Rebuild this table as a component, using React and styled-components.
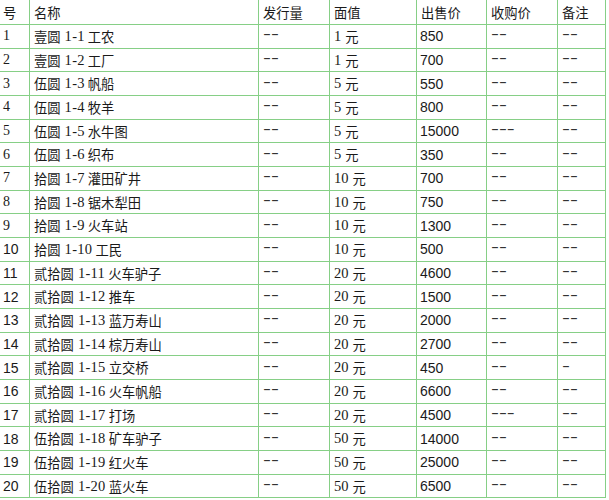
import React from 'react';
import styled, { createGlobalStyle } from 'styled-components';

const GlobalStyle = createGlobalStyle`
    html, body {
        margin: 0;
        padding: 0;
        background: #ffffff;
    }
`;

const Sheet = styled.div`
    display: grid;
    grid-template-columns: 30px 229px 71px 87px 70px 71px 48px;
    grid-template-rows: 25px;
    grid-auto-rows: 23.68px;
    width: 606px;
    font-family: "Liberation Serif", "Noto Sans CJK SC", serif;
    font-size: 13.3px;
    color: #1a1a1a;
    background: #ffffff;
`;

const Cell = styled.div`
    display: flex;
    align-items: center;
    padding-left: ${(p) => p.$pad || 3}px;
    border-right: 1px solid #86cf86;
    border-bottom: 1px solid #86cf86;
    white-space: nowrap;
    overflow: hidden;
    font-family: ${(p) => (p.$sans ? '"Liberation Sans", "Noto Sans CJK SC", sans-serif' : 'inherit')};
    font-size: ${(p) => (p.$big ? '14px' : 'inherit')};
`;

// Latin part of a mixed label, a bit larger like the half-width glyphs of the original
const Code = styled.span`
    font-size: 14.5px;
    margin: 0 3px 0 4px;
    letter-spacing: 0.3px;
`;

const Face = styled.span`
    font-size: 14.5px;
    margin-right: 4px;
`;

const Dash = styled.span`
    display: inline-block;
    font-family: "Liberation Sans", sans-serif;
    font-size: 14px;
    letter-spacing: 0;
    color: #333;
    transform-origin: left center;
    transform: translateY(-2px) scaleX(1.7);
`;

const headers = ['号', '名称', '发行量', '面值', '出售价', '收购价', '备注'];

const rows = [
    ['1', '壹圆', '1-1', '工农', '1', '850'],
    ['2', '壹圆', '1-2', '工厂', '1', '700'],
    ['3', '伍圆', '1-3', '帆船', '5', '550'],
    ['4', '伍圆', '1-4', '牧羊', '5', '800'],
    ['5', '伍圆', '1-5', '水牛图', '5', '15000', '---'],
    ['6', '伍圆', '1-6', '织布', '5', '350'],
    ['7', '拾圆', '1-7', '灌田矿井', '10', '700'],
    ['8', '拾圆', '1-8', '锯木犁田', '10', '750'],
    ['9', '拾圆', '1-9', '火车站', '10', '1300'],
    ['10', '拾圆', '1-10', '工民', '10', '500'],
    ['11', '贰拾圆', '1-11', '火车驴子', '20', '4600'],
    ['12', '贰拾圆', '1-12', '推车', '20', '1500'],
    ['13', '贰拾圆', '1-13', '蓝万寿山', '20', '2000'],
    ['14', '贰拾圆', '1-14', '棕万寿山', '20', '2700'],
    ['15', '贰拾圆', '1-15', '立交桥', '20', '450', '--', '-'],
    ['16', '贰拾圆', '1-16', '火车帆船', '20', '6600'],
    ['17', '贰拾圆', '1-17', '打场', '20', '4500', '---'],
    ['18', '伍拾圆', '1-18', '矿车驴子', '50', '14000'],
    ['19', '伍拾圆', '1-19', '红火车', '50', '25000'],
    ['20', '伍拾圆', '1-20', '蓝火车', '50', '6500'],
];

const App = () => {
    return (
        <>
            <GlobalStyle />
            <Sheet>
                {headers.map((h, i) => (
                    <Cell key={h} $pad={i === 0 ? 3 : 4}>{h}</Cell>
                ))}
                {rows.map(([no, unit, code, title, face, price, buy = '--', note = '--']) => (
                    <React.Fragment key={no}>
                        <Cell $sans={no.length > 1} $big>{no}</Cell>
                        <Cell $pad={4}>
                            {unit}
                            <Code>{code}</Code>
                            {title}
                        </Cell>
                        <Cell $pad={4}><Dash>--</Dash></Cell>
                        <Cell $pad={4}>
                            <Face>{face}</Face>元
                        </Cell>
                        <Cell $pad={3} $sans $big>{price}</Cell>
                        <Cell $pad={4}><Dash>{buy}</Dash></Cell>
                        <Cell $pad={4}><Dash>{note}</Dash></Cell>
                    </React.Fragment>
                ))}
            </Sheet>
        </>
    );
};

export default App;
